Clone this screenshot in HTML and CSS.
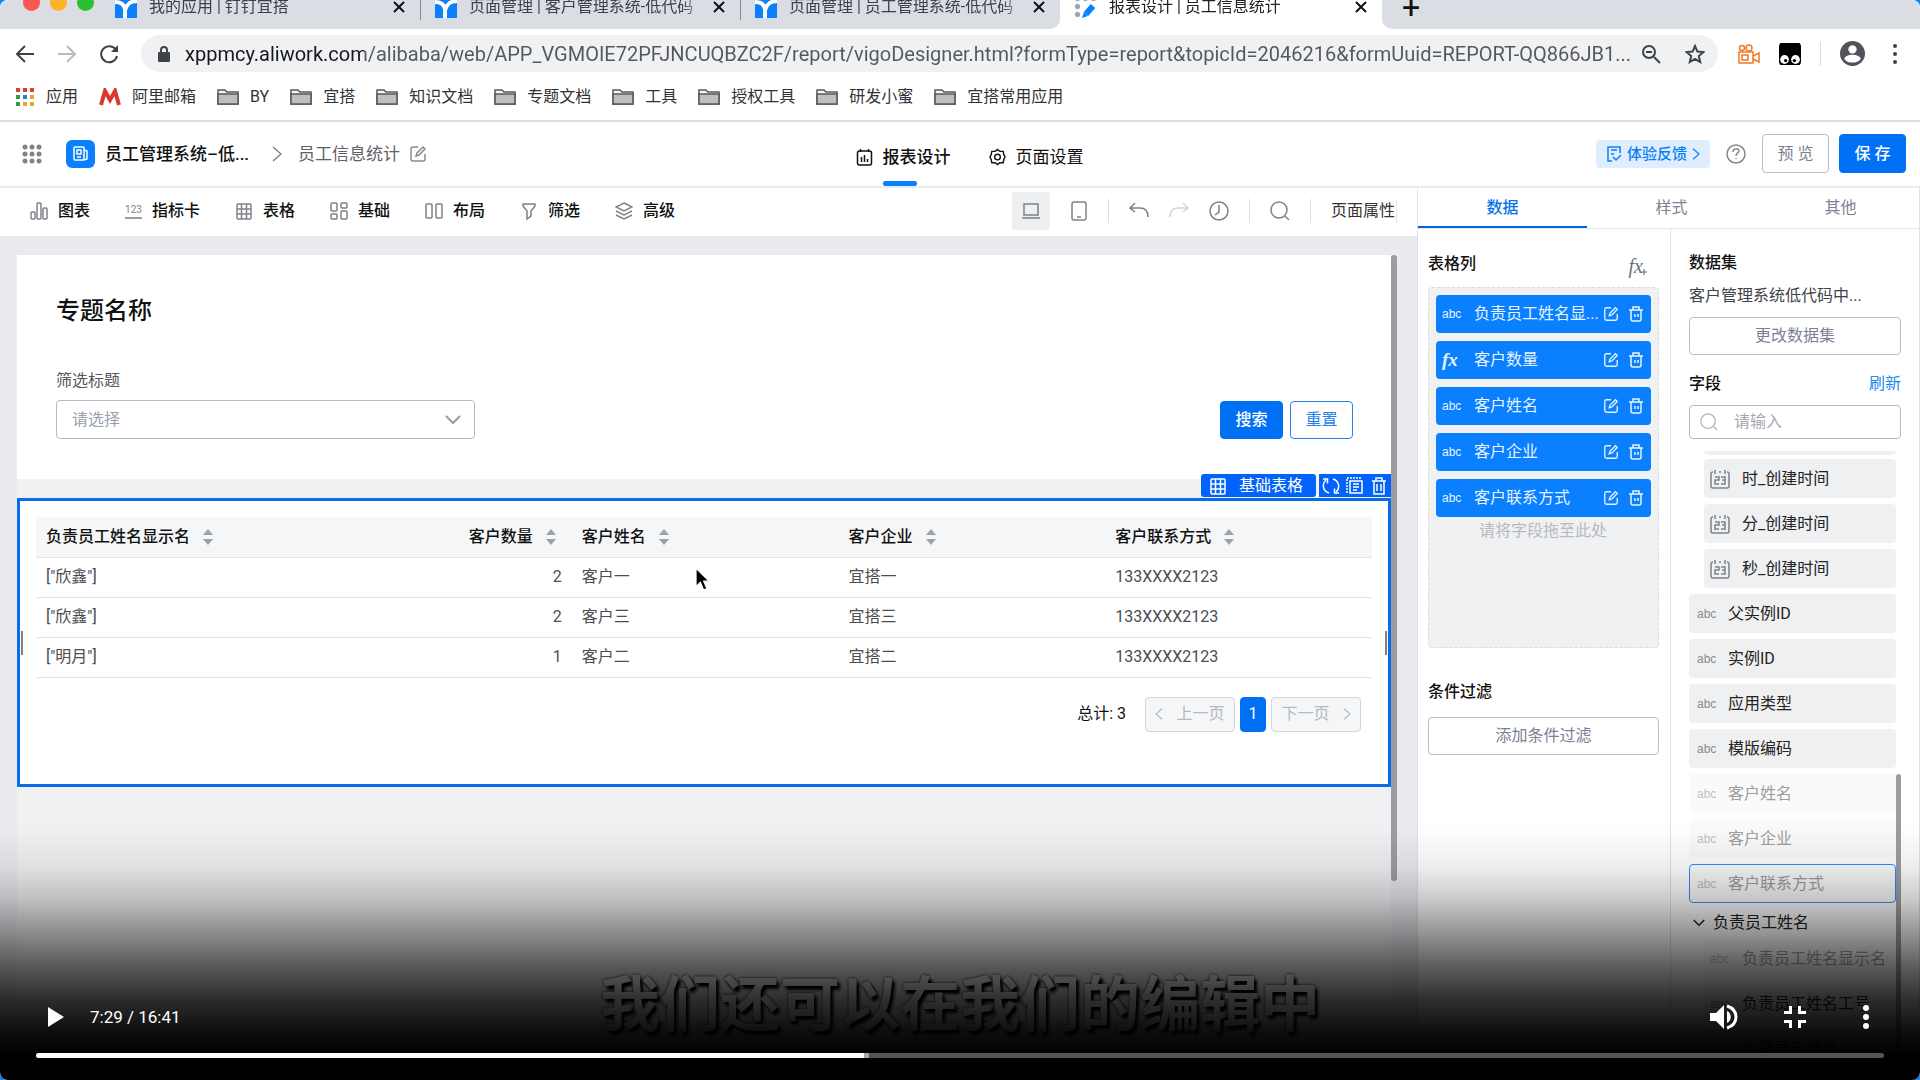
FILE: index.html
```html
<!DOCTYPE html>
<html lang="zh-CN">
<head>
    <meta charset="UTF-8">
    <meta name="viewport" content="width=device-width, initial-scale=1.0">
    <title>报表设计 | 员工信息统计</title>
    <link rel="stylesheet" href="styles.css">
</head>
<body>

<!-- Icons -->
<svg class="sprite" aria-hidden="true">
    <symbol id="i-close" viewBox="0 0 12 12"><path d="M1 1l10 10M11 1L1 11"/></symbol>
    <symbol id="i-yida" viewBox="0 0 22 22"><path d="M0 0h22v22H0z" fill="#0a80ff" stroke="none"/><path d="M0 6c6 0 9 2 10 7v9M22 5c-7 0-10 3-12 9" stroke="#fff" stroke-width="4"/></symbol>
    <symbol id="i-design" viewBox="0 0 22 22"><g fill="#9da3ad" stroke="none"><rect width="5" height="5" rx="2"/><rect x="8" width="5" height="5" rx="2"/><rect x="16" width="5" height="5" rx="2"/><rect y="8" width="5" height="5" rx="2"/><rect y="16" width="5" height="5" rx="2"/></g><path d="M11 18L18 10" stroke="#0a80ff" stroke-width="6"/><path d="M7 22l2-6 4 4z" fill="#0a80ff" stroke="none"/></symbol>
    <symbol id="i-back" viewBox="0 0 20 20"><path d="M19 10H3M10 2l-8 8 8 8"/></symbol>
    <symbol id="i-fwd" viewBox="0 0 20 20"><path d="M1 10h16M10 2l8 8-8 8"/></symbol>
    <symbol id="i-reload" viewBox="0 0 20 20"><path d="M17 6a8 8 0 1 0 1 6"/><path d="M19 1v7h-7z" fill="currentColor" stroke="none"/></symbol>
    <symbol id="i-lock" viewBox="0 0 12 16"><path d="M1 6h10a1 1 0 0 1 1 1v8a1 1 0 0 1-1 1H1a1 1 0 0 1-1-1V7a1 1 0 0 1 1-1z" fill="currentColor" stroke="none"/><path d="M3 7V4a3 3 0 0 1 6 0v3"/></symbol>
    <symbol id="i-zoomout" viewBox="0 0 20 20"><circle cx="8" cy="8" r="6"/><path d="M13 13l6 6M5 8h6"/></symbol>
    <symbol id="i-star" viewBox="0 0 20 20"><path d="M10 2l2.400 5.600 6 .5-4.600 4 1.400 5.900-5.200-3.200L4.800 18l1.400-5.900-4.600-4 6-.5z"/></symbol>
    <symbol id="i-camera" viewBox="0 0 22 20"><path d="M1 8h14v11H1zM15 12l6-3v9l-6-3M4 11h6v5H4z"/><circle cx="4" cy="4" r="2.500"/><circle cx="11" cy="4" r="3"/></symbol>
    <symbol id="i-monkey" viewBox="0 0 20 20"><rect y="-1" width="20" height="22" rx="4" fill="#000" stroke="none"/><circle cx="5" cy="15" r="4" fill="#fff" stroke="none"/><circle cx="15" cy="15" r="4" fill="#fff" stroke="none"/><circle cx="6" cy="16" r="1.500" fill="#000" stroke="none"/><circle cx="14" cy="16" r="1.500" fill="#000" stroke="none"/></symbol>
    <symbol id="i-user" viewBox="0 0 24 24"><circle cx="12" cy="12" r="12" fill="#50535a" stroke="none"/><circle cx="12" cy="8" r="4" fill="#fff" stroke="none"/><path d="M4 17c2-5 14-5 16 0-3 5-13 5-16 0z" fill="#fff" stroke="none"/></symbol>
    <symbol id="i-more" viewBox="0 0 6 24"><g fill="currentColor" stroke="none"><circle cx="3" cy="4" r="2"/><circle cx="3" cy="12" r="2"/><circle cx="3" cy="20" r="2"/></g></symbol>
    <symbol id="i-menu" viewBox="0 0 8 26"><g fill="currentColor" stroke="none"><circle cx="4" cy="4" r="3"/><circle cx="4" cy="13" r="3"/><circle cx="4" cy="22" r="3"/></g></symbol>
    <symbol id="i-apps" viewBox="0 0 18 18"><g stroke="none"><path d="M0 0h4v4H0zM7 0h4v4H7zM14 0h4v4h-4z" fill="#e33b2e"/><path d="M0 7h4v4H0z" fill="#2d9a4c"/><path d="M7 7h4v4H7z" fill="#2a7de1"/><path d="M14 7h4v4h-4zM7 14h4v4H7zM14 14h4v4h-4z" fill="#e5a823"/><path d="M0 14h4v4H0z" fill="#2d9a4c"/></g></symbol>
    <symbol id="i-mail" viewBox="0 0 22 18"><path d="M2 17L6 3l5 9 5-9 4 14" stroke="#d9382c" stroke-width="4"/></symbol>
    <symbol id="i-folder" viewBox="0 0 22 18"><path d="M1 16V2h7l2 2h11v12z" fill="#f4f4f4"/><path d="M1 6h20v10H1z" fill="#bfbfbf"/></symbol>
    <symbol id="i-dots9" viewBox="0 0 20 20"><g fill="#7f8389" stroke="none"><circle cx="3" cy="3" r="2.500"/><circle cx="10" cy="3" r="2.500"/><circle cx="17" cy="3" r="2.500"/><circle cx="3" cy="10" r="2.500"/><circle cx="10" cy="10" r="2.500"/><circle cx="17" cy="10" r="2.500"/><circle cx="3" cy="17" r="2.500"/><circle cx="10" cy="17" r="2.500"/><circle cx="17" cy="17" r="2.500"/></g></symbol>
    <symbol id="i-doc" viewBox="0 0 16 16"><rect x="1" y="1" width="10" height="13" rx="1"/><path d="M11 4l3 1v8l-3 1M4 4h4v4H4zM4 11h4"/></symbol>
    <symbol id="i-right" viewBox="0 0 10 16"><path d="M1 1l8 7-8 7"/></symbol>
    <symbol id="i-left" viewBox="0 0 10 16"><path d="M9 1L1 8l8 7"/></symbol>
    <symbol id="i-down" viewBox="0 0 16 10"><path d="M1 1l7 7 7-7"/></symbol>
    <symbol id="i-edit" viewBox="0 0 18 18"><path d="M9 2H4a2 2 0 0 0-2 2v10a2 2 0 0 0 2 2h10a2 2 0 0 0 2-2V9M7 11l1-3 6-6 2 2-6 6z"/></symbol>
    <symbol id="i-report" viewBox="0 0 16 18"><rect x="1" y="3" width="14" height="14" rx="2"/><path d="M4 1v3M12 1v3M5 9v5M8 7v7M11 11v3"/></symbol>
    <symbol id="i-gear" viewBox="0 0 18 18"><path d="M9 1l2.500 2H15l.7 3.500L17 9l-1.300 2.500L15 15h-3.500L9 17l-2.500-2H3l-.7-3.500L1 9l1.300-2.500L3 3h3.500z"/><circle cx="9" cy="9" r="3"/></symbol>
    <symbol id="i-feedback" viewBox="0 0 16 16"><path d="M6 15H2V1h12v6M5 4h6M5 8h3M7 11l3 3 5-5"/></symbol>
    <symbol id="i-help" viewBox="0 0 20 20"><circle cx="10" cy="10" r="9"/><path d="M7 8c0-4 6-4 6-1 0 2-3 2-3 5M10 14v1"/></symbol>
    <symbol id="i-chart" viewBox="0 0 18 18"><rect x="1" y="10" width="4" height="7" rx="1"/><rect x="7" y="1" width="4" height="16" rx="1"/><rect x="13" y="6" width="4" height="11" rx="1"/></symbol>
    <symbol id="i-grid" viewBox="0 0 18 18"><rect x="2" y="2" width="14" height="15" rx="1"/><path d="M2 7h14M2 12h14M6.500 2v15M11.500 2v15"/></symbol>
    <symbol id="i-base" viewBox="0 0 18 18"><rect x="1" y="1" width="6" height="8" rx="1"/><rect x="11" y="1" width="6" height="5" rx="1"/><rect x="1" y="12" width="6" height="5" rx="1"/><rect x="11" y="9" width="6" height="8" rx="1"/></symbol>
    <symbol id="i-layout" viewBox="0 0 18 18"><rect x="1" y="2" width="6" height="14" rx="1"/><rect x="11" y="2" width="6" height="14" rx="1"/></symbol>
    <symbol id="i-filter" viewBox="0 0 18 18"><path d="M3 2h12v2l-4 5v5l-4 3V9L3 4z"/></symbol>
    <symbol id="i-layers" viewBox="0 0 18 18"><path d="M9 1l8 4-8 4-8-4zM1 9l8 4 8-4M1 13l8 4 8-4"/></symbol>
    <symbol id="i-laptop" viewBox="0 0 20 18"><path d="M3 2h14v11H3zM1 16h18"/></symbol>
    <symbol id="i-phone" viewBox="0 0 16 20"><rect x="1" y="1" width="14" height="18" rx="2"/><path d="M6 16h4"/></symbol>
    <symbol id="i-undo" viewBox="0 0 20 18"><path d="M6 1L1 6l5 4M1 6h10c5 0 8 3 8 9"/></symbol>
    <symbol id="i-redo" viewBox="0 0 20 18"><path d="M14 1l5 5-5 4M19 6H9c-5 0-8 3-8 9"/></symbol>
    <symbol id="i-clock" viewBox="0 0 20 20"><circle cx="10" cy="10" r="9"/><path d="M10 4v7l-4 3"/></symbol>
    <symbol id="i-search" viewBox="0 0 20 20"><circle cx="9" cy="9" r="8"/><path d="M15 15l4 4"/></symbol>
    <symbol id="i-sort" viewBox="0 0 12 16"><path d="M6 0l5 6H1zM6 16l5-6H1z" fill="#9da1ab" stroke="none"/></symbol>
    <symbol id="i-sync" viewBox="0 0 18 18"><path d="M7 16A7.500 7.500 0 0 1 4 3M11 2a7.500 7.500 0 0 1 3 13M1 2h4.500v4.500M17 16h-4.500v-4.500"/></symbol>
    <symbol id="i-copy" viewBox="0 0 18 18"><path d="M4 4h12v12H4z"/><path d="M1 16V1h15" stroke-dasharray="2 1"/><path d="M7 7h6M7 10h6M7 13h4"/></symbol>
    <symbol id="i-trash" viewBox="0 0 16 18"><path d="M1 4h14M5 4V1h6v3M3 4v13h10V4M6 7v7M10 7v7"/></symbol>
    <symbol id="i-bin" viewBox="0 0 16 18"><path d="M1 5h14M5 5V2h6v3M3 5v9a2 2 0 0 0 2 2h6a2 2 0 0 0 2-2V5M7 9v3M10 9v3"/></symbol>
    <symbol id="i-cal" viewBox="0 0 20 20"><path d="M3 3a2 2 0 0 0-2 2v12a2 2 0 0 0 2 2h14a2 2 0 0 0 2-2V5a2 2 0 0 0-2-2M5 1v4M15 1v4M9 3h2M5 8h4v3H5v4h4M11 8h4v7h-4M12 11h3"/></symbol>
    <symbol id="i-play" viewBox="0 0 16 20"><path d="M0 0l16 10L0 20z" fill="#fff" stroke="none"/></symbol>
    <symbol id="i-volume" viewBox="0 0 28 26"><path d="M0 9v8h6l8 8V1L6 9z" fill="#fff" stroke="none"/><path d="M17 7c5 2 5 10 0 12z" fill="#fff" stroke="none"/><path d="M17 2c12 4 12 18 0 22" stroke="#fff" stroke-width="3"/></symbol>
    <symbol id="i-exit" viewBox="0 0 22 22"><path d="M0 6.500h6.500V0M15.500 0v6.500H22M0 15.500h6.500V22M15.500 22v-6.500H22" stroke="#fff" stroke-width="3"/></symbol>
</svg>

<div class="window">

    <div class="tab-strip">
        <div class="lights"><i class="red"></i><i class="yellow"></i><i class="green"></i></div>
        <div class="tab"><svg class="fav"><use href="#i-yida"/></svg><span>我的应用 | 钉钉宜搭</span><button aria-label="关闭"><svg><use href="#i-close"/></svg></button></div>
        <div class="tab"><svg class="fav"><use href="#i-yida"/></svg><span>页面管理 | 客户管理系统-低代码</span><button aria-label="关闭"><svg><use href="#i-close"/></svg></button></div>
        <div class="tab"><svg class="fav"><use href="#i-yida"/></svg><span>页面管理 | 员工管理系统-低代码</span><button aria-label="关闭"><svg><use href="#i-close"/></svg></button></div>
        <div class="tab active"><svg class="fav"><use href="#i-design"/></svg><span>报表设计 | 员工信息统计</span><button aria-label="关闭"><svg><use href="#i-close"/></svg></button></div>
        <div class="tab-rest"><button aria-label="新标签页">+</button></div>
    </div>

    <div class="address-row">
        <button class="nav-btn" aria-label="后退"><svg><use href="#i-back"/></svg></button>
        <button class="nav-btn off" aria-label="前进"><svg><use href="#i-fwd"/></svg></button>
        <button class="nav-btn" aria-label="刷新"><svg><use href="#i-reload"/></svg></button>
        <div class="url-bar">
            <svg class="lock"><use href="#i-lock"/></svg>
            <input type="text" aria-label="地址" value="xppmcy.aliwork.com/alibaba/web/APP_VGMOIE72PFJNCUQBZC2F/report/vigoDesigner.html?formType=report&amp;topicId=2046216&amp;formUuid=REPORT-QQ866JB1...">
            <svg><use href="#i-zoomout"/></svg>
            <svg><use href="#i-star"/></svg>
        </div>
        <div class="extensions">
            <svg class="orange"><use href="#i-camera"/></svg>
            <svg><use href="#i-monkey"/></svg>
            <i class="vline"></i>
            <svg class="avatar"><use href="#i-user"/></svg>
            <svg class="more"><use href="#i-more"/></svg>
        </div>
    </div>

    <nav class="bookmarks">
        <a href="#" class="apps"><svg><use href="#i-apps"/></svg>应用</a>
        <a href="#"><svg><use href="#i-mail"/></svg>阿里邮箱</a>
        <a href="#"><svg><use href="#i-folder"/></svg>BY</a>
        <a href="#"><svg><use href="#i-folder"/></svg>宜搭</a>
        <a href="#"><svg><use href="#i-folder"/></svg>知识文档</a>
        <a href="#"><svg><use href="#i-folder"/></svg>专题文档</a>
        <a href="#"><svg><use href="#i-folder"/></svg>工具</a>
        <a href="#"><svg><use href="#i-folder"/></svg>授权工具</a>
        <a href="#"><svg><use href="#i-folder"/></svg>研发小蜜</a>
        <a href="#"><svg><use href="#i-folder"/></svg>宜搭常用应用</a>
    </nav>

    <header class="app-header">
        <div class="crumbs">
            <svg class="dots"><use href="#i-dots9"/></svg>
            <span class="app-icon"><svg><use href="#i-doc"/></svg></span>
            <strong>员工管理系统–低...</strong>
            <svg class="sep"><use href="#i-right"/></svg>
            <span class="current">员工信息统计</span>
            <svg class="pen"><use href="#i-edit"/></svg>
        </div>
        <nav class="modes">
            <a href="#" class="on"><svg><use href="#i-report"/></svg><span>报表设计</span></a>
            <a href="#"><svg><use href="#i-gear"/></svg><span>页面设置</span></a>
        </nav>
        <div class="actions">
            <button class="feedback"><svg><use href="#i-feedback"/></svg>体验反馈<svg class="arrow"><use href="#i-right"/></svg></button>
            <button class="help" aria-label="帮助"><svg><use href="#i-help"/></svg></button>
            <button class="btn big">预 览</button>
            <button class="btn big primary">保 存</button>
        </div>
    </header>

    <div class="workspace">
        <main>
            <div class="toolbar">
                <button><svg><use href="#i-chart"/></svg>图表</button>
                <button><b class="num">123</b>指标卡</button>
                <button><svg><use href="#i-grid"/></svg>表格</button>
                <button><svg><use href="#i-base"/></svg>基础</button>
                <button><svg><use href="#i-layout"/></svg>布局</button>
                <button><svg><use href="#i-filter"/></svg>筛选</button>
                <button><svg><use href="#i-layers"/></svg>高级</button>
                <div class="tools">
                    <button class="square" aria-label="电脑"><svg><use href="#i-laptop"/></svg></button>
                    <button class="phone" aria-label="手机"><svg><use href="#i-phone"/></svg></button>
                    <i class="vline"></i>
                    <button aria-label="撤销"><svg><use href="#i-undo"/></svg></button>
                    <button class="off" aria-label="重做"><svg><use href="#i-redo"/></svg></button>
                    <button aria-label="历史"><svg><use href="#i-clock"/></svg></button>
                    <i class="vline"></i>
                    <button aria-label="搜索"><svg><use href="#i-search"/></svg></button>
                    <i class="vline"></i>
                    <button class="props">页面属性</button>
                </div>
            </div>

            <div class="canvas">
                <div class="page">
                    <section class="top-card">
                        <h1>专题名称</h1>
                        <label for="filter">筛选标题</label>
                        <div class="filter-row">
                            <div class="select">
                                <select id="filter"><option>请选择</option></select>
                                <svg><use href="#i-down"/></svg>
                            </div>
                            <div class="filter-btns">
                                <button class="btn primary">搜索</button>
                                <button class="btn ghost">重置</button>
                            </div>
                        </div>
                    </section>

                    <section class="selected">
                        <div class="block-tag">
                            <span class="name"><svg><use href="#i-grid"/></svg>基础表格</span>
                            <span class="ops"><svg><use href="#i-sync"/></svg><svg><use href="#i-copy"/></svg><svg><use href="#i-trash"/></svg></span>
                        </div>
                        <i class="handle left"></i>
                        <i class="handle right"></i>
                        <table>
                            <thead>
                                <tr>
                                    <th class="first">负责员工姓名显示名<svg><use href="#i-sort"/></svg></th>
                                    <th class="r">客户数量<svg><use href="#i-sort"/></svg></th>
                                    <th>客户姓名<svg><use href="#i-sort"/></svg></th>
                                    <th>客户企业<svg><use href="#i-sort"/></svg></th>
                                    <th>客户联系方式<svg><use href="#i-sort"/></svg></th>
                                </tr>
                            </thead>
                            <tbody>
                                <tr><td>["欣鑫"]</td><td class="r">2</td><td>客户一</td><td>宜搭一</td><td>133XXXX2123</td></tr>
                                <tr><td>["欣鑫"]</td><td class="r">2</td><td>客户三</td><td>宜搭三</td><td>133XXXX2123</td></tr>
                                <tr><td>["明月"]</td><td class="r">1</td><td>客户二</td><td>宜搭二</td><td>133XXXX2123</td></tr>
                            </tbody>
                        </table>
                        <div class="pager">
                            <span>总计: 3</span>
                            <button disabled><svg><use href="#i-left"/></svg>上一页</button>
                            <button class="num-page">1</button>
                            <button disabled>下一页<svg><use href="#i-right"/></svg></button>
                        </div>
                        <svg class="cursor" viewBox="0 0 14 22"><path d="M1 1v17l4-4 3 7 3-1-3-7h5z" fill="#000" stroke="#fff"/></svg>
                    </section>
                </div>
                <div class="scroll"></div>
            </div>
        </main>

        <aside>
            <nav class="side-tabs">
                <a href="#" class="on">数据</a>
                <a href="#">样式</a>
                <a href="#">其他</a>
            </nav>
            <div class="side-cols">
                <div class="columns">
                    <div class="title">表格列<i class="fx">fx<svg viewBox="0 0 8 8"><path d="M4 0v8M0 4h8"/></svg></i></div>
                    <ul class="drop">
                        <li><small>abc</small><span>负责员工姓名显...</span><svg><use href="#i-edit"/></svg><svg><use href="#i-bin"/></svg></li>
                        <li><em>fx</em><span>客户数量</span><svg><use href="#i-edit"/></svg><svg><use href="#i-bin"/></svg></li>
                        <li><small>abc</small><span>客户姓名</span><svg><use href="#i-edit"/></svg><svg><use href="#i-bin"/></svg></li>
                        <li><small>abc</small><span>客户企业</span><svg><use href="#i-edit"/></svg><svg><use href="#i-bin"/></svg></li>
                        <li><small>abc</small><span>客户联系方式</span><svg><use href="#i-edit"/></svg><svg><use href="#i-bin"/></svg></li>
                        <li class="hint">请将字段拖至此处</li>
                    </ul>
                    <div class="title">条件过滤</div>
                    <button class="btn wide">添加条件过滤</button>
                </div>

                <div class="dataset">
                    <div class="title">数据集</div>
                    <p>客户管理系统低代码中...</p>
                    <button class="btn wide">更改数据集</button>
                    <div class="title fields-title">字段<a href="#">刷新</a></div>
                    <div class="search">
                        <svg><use href="#i-search"/></svg>
                        <input type="text" placeholder="请输入" aria-label="搜索字段">
                    </div>
                    <div class="field-box">
                        <ul class="fields">
                            <li class="sub cut"></li>
                            <li class="sub"><svg><use href="#i-cal"/></svg>时_创建时间</li>
                            <li class="sub"><svg><use href="#i-cal"/></svg>分_创建时间</li>
                            <li class="sub"><svg><use href="#i-cal"/></svg>秒_创建时间</li>
                            <li><small>abc</small>父实例ID</li>
                            <li><small>abc</small>实例ID</li>
                            <li><small>abc</small>应用类型</li>
                            <li><small>abc</small>模版编码</li>
                            <li class="used"><small>abc</small>客户姓名</li>
                            <li class="used"><small>abc</small>客户企业</li>
                            <li class="used focus"><small>abc</small>客户联系方式</li>
                            <li class="group"><svg><use href="#i-down"/></svg>负责员工姓名</li>
                            <li class="sub used"><small>abc</small>负责员工姓名显示名</li>
                            <li class="sub"><small>abc</small>负责员工姓名工号</li>
                            <li class="sub"><small>abc</small>负责员工姓名</li>
                        </ul>
                        <div class="scroll"></div>
                    </div>
                </div>
            </div>
        </aside>
    </div>

    <div class="subtitle">我们还可以在我们的编辑中</div>

    <!-- Video controls -->
    <div class="player">
        <div class="controls">
            <button aria-label="播放"><svg class="play"><use href="#i-play"/></svg></button>
            <span class="time">7:29 / 16:41</span>
            <button aria-label="音量"><svg class="vol"><use href="#i-volume"/></svg></button>
            <button aria-label="退出全屏"><svg class="exit"><use href="#i-exit"/></svg></button>
            <button aria-label="更多"><svg class="menu"><use href="#i-menu"/></svg></button>
        </div>
        <input class="seek" type="range" min="0" max="1001" value="449" aria-label="进度" style="--played: 44.8%; --loaded: 45.1%">
    </div>
</div>

</body>
</html>
```
FILE: styles.css
```css
* {
    box-sizing: border-box;
}

body {
    margin: 0;
    background: #0a84ff;
    font-family: Roboto, "Noto Sans CJK SC", sans-serif;
    font-size: 16px;
    line-height: 24px;
    color: #111;
}

a {
    color: inherit;
    text-decoration: none;
}

button,
input,
select {
    font: inherit;
    color: inherit;
    border: none;
    background: none;
    padding: 0;
}

button {
    display: flex;
    align-items: center;
    justify-content: center;
}

ul {
    list-style: none;
    margin: 0;
    padding: 0;
}

svg {
    width: 18px;
    height: 18px;
    flex: none;
    fill: none;
    stroke: currentColor;
    stroke-width: 1.5;
}

.sprite {
    position: absolute;
    width: 0;
    height: 0;
}

.window {
    position: relative;
    display: flex;
    flex-direction: column;
    height: 100vh;
    overflow: hidden;
    border-radius: 8px;
    background: #fff;
}

.vline {
    width: 1px;
    height: 24px;
    background: #dcdee3;
}

/* Browser tabs */
.tab-strip {
    display: flex;
    align-items: flex-end;
    height: 29px;
    overflow: hidden;
    flex: none;
    background: #fff;
}

.lights {
    display: flex;
    align-items: flex-end;
    gap: 10px;
    width: 100px;
    height: 44px;
    padding: 0 0 18px 23px;
    background: #dadde4;
}

.lights i {
    width: 17px;
    height: 17px;
    border-radius: 50%;
}

.red { background: #fc5650; }
.yellow { background: #fdb42c; }
.green { background: #28c131; }

.tab {
    display: flex;
    align-items: center;
    gap: 12px;
    width: 320px;
    height: 44px;
    padding: 0 15px;
    background: #dadde4;
    color: #3c3f45;
}

.tab + .tab:not(.active) {
    background: linear-gradient(#8a8d94, #8a8d94) 0 11px / 1px 24px no-repeat #dadde4;
}

.tab:nth-child(4) {
    border-bottom-right-radius: 10px;
}

.tab.active {
    width: 322px;
    background: #fff;
    color: #222;
}

.tab span {
    flex: 1;
    overflow: hidden;
    white-space: nowrap;
    -webkit-mask-image: linear-gradient(to right, #000 90%, transparent);
    mask-image: linear-gradient(to right, #000 90%, transparent);
}

.tab .fav {
    width: 22px;
    height: 22px;
}

.tab button {
    margin-left: -5px;
}

.tab button svg {
    width: 12px;
    height: 12px;
    color: #111;
    stroke-width: 2;
}

.tab-rest {
    display: flex;
    align-items: center;
    flex: 1;
    height: 44px;
    padding-left: 20px;
    border-bottom-left-radius: 10px;
    background: #dadde4;
}

.tab-rest button {
    font-size: 32px;
}

/* Address bar */
.address-row {
    display: flex;
    align-items: center;
    height: 49px;
    flex: none;
    padding: 0 21px 0 15px;
    color: #3f4247;
}

.nav-btn {
    width: 20px;
    margin-right: 22px;
}

.nav-btn svg {
    width: 20px;
    height: 20px;
    stroke-width: 2;
}

.off {
    color: #b9bbbf;
}

.url-bar {
    display: flex;
    align-items: center;
    gap: 24px;
    flex: 1;
    height: 37px;
    padding: 0 13px 0 17px;
    border-radius: 20px;
    background: #eff1f2;
}

.url-bar svg {
    width: 20px;
    height: 20px;
    stroke-width: 2;
}

.url-bar .lock {
    width: 12px;
    height: 16px;
    margin-right: -9px;
}

.url-bar input {
    flex: 1;
    min-width: 0;
    margin-right: -20px;
    font-size: 20px;
    color: transparent;
    background: linear-gradient(to right, #16181b 179px, #54575c 179px);
    -webkit-background-clip: text;
    background-clip: text;
}

.extensions {
    display: flex;
    align-items: center;
    gap: 19px;
    padding-left: 20px;
}

.extensions svg {
    width: 22px;
    height: 22px;
}

.extensions .orange {
    color: #f07a22;
}

.extensions .avatar {
    width: 25px;
    height: 25px;
}

.extensions .more {
    width: 8px;
    height: 24px;
    margin-left: 7px;
}

.bookmarks {
    display: flex;
    align-items: center;
    gap: 21px;
    height: 44px;
    flex: none;
    padding: 0 16px 5px;
    border-bottom: 2px solid #dcdde0;
    color: #303338;
    white-space: nowrap;
}

.bookmarks a {
    display: flex;
    align-items: center;
    gap: 11px;
}

.bookmarks svg {
    width: 22px;
    stroke: #55585c;
}

.bookmarks .apps {
    gap: 12px;
}

.bookmarks .apps svg {
    width: 18px;
}

/* App header */
.app-header {
    display: grid;
    grid-template-columns: 1fr auto 1fr;
    height: 66px;
    flex: none;
    padding: 0 14px 0 22px;
    border-bottom: 2px solid #e9ebee;
}

.crumbs,
.actions {
    display: flex;
    align-items: center;
    padding-bottom: 1px;
}

.crumbs strong {
    margin: 0 23px 0 10px;
    font-size: 17px;
    font-weight: 500;
}

.crumbs .dots {
    width: 20px;
    height: 20px;
    margin-right: 24px;
}

.app-icon {
    display: flex;
    align-items: center;
    justify-content: center;
    width: 29px;
    height: 28px;
    border-radius: 6px;
    background: #0a80ff;
    color: #fff;
}

.app-icon svg {
    width: 16px;
    height: 16px;
}

.crumbs .sep {
    width: 10px;
    height: 16px;
    margin-right: 16px;
    color: #7c8087;
}

.current {
    font-size: 17px;
    color: #5f6268;
}

.crumbs .pen {
    margin-left: 9px;
    color: #868a91;
}

.modes {
    display: flex;
    gap: 38px;
    padding-left: 11px;
    font-size: 17px;
}

.modes a {
    display: flex;
    gap: 10px;
    align-items: center;
    padding-top: 6px;
}

.modes svg {
    width: 17px;
}

.modes span {
    display: flex;
    align-items: center;
    height: 100%;
}

.modes .on span {
    position: relative;
    font-weight: 500;
}

.modes .on span::after {
    content: "";
    position: absolute;
    left: 0;
    bottom: 0;
    width: 34px;
    height: 5px;
    border-radius: 3px;
    background: #0a80ff;
}

.actions {
    justify-content: flex-end;
}

.feedback {
    gap: 5px;
    height: 28px;
    padding: 0 10px;
    border-radius: 4px;
    background: #deeeff;
    color: #0a80f5;
    font-size: 15px;
    font-weight: 500;
}

.feedback svg {
    width: 16px;
    height: 16px;
}

.feedback .arrow {
    width: 8px;
    height: 12px;
}

.help {
    margin: 0 16px;
    color: #85888e;
}

.help svg {
    width: 20px;
    height: 20px;
}

.btn {
    height: 38px;
    border: 1px solid #b9bdc4;
    border-radius: 4px;
    background: #fff;
    color: #7b8192;
    width: 63px;
}

.btn.big {
    width: 67px;
    height: 39px;
    margin-left: 10px;
}

.actions .help + .btn {
    margin-left: 0;
}

.btn.primary {
    border-color: #0070f5;
    background: #0070f5;
    color: #fff;
    font-weight: 500;
}

.btn.ghost {
    border-color: #2680ea;
    color: #2680ea;
}

.btn.wide {
    width: 100%;
}

/* Workspace */
.workspace {
    display: flex;
    flex: 1;
    min-height: 0;
}

main {
    display: flex;
    flex-direction: column;
    flex: 1;
    min-width: 0;
}

.toolbar {
    display: flex;
    align-items: center;
    gap: 35px;
    height: 48px;
    flex: none;
    padding: 0 20px 2px 30px;
}

.toolbar button {
    gap: 10px;
    font-weight: 500;
    white-space: nowrap;
}

.toolbar svg,
.num {
    color: #7e8288;
}

.num {
    border-bottom: 2px solid #9b9ea3;
    font-size: 10px;
    line-height: 14px;
    font-weight: 400;
}

.tools {
    display: flex;
    align-items: center;
    gap: 20px;
    margin-left: auto;
}

.tools svg {
    width: 20px;
    height: 20px;
}

.tools .phone svg {
    width: 18px;
}

.tools .square {
    width: 38px;
    height: 38px;
    border-radius: 3px;
    background: #eeeff1;
}

.tools .off svg {
    color: #d2d4d8;
}

.tools .props {
    padding-right: 1px;
    border-right: 1px solid #e3e5e8;
    color: #333;
    font-weight: 400;
}

.canvas {
    display: flex;
    flex: 1;
    min-height: 0;
    padding: 19px 20px 0 17px;
    background: #e9ebef;
}

.page {
    flex: 1;
    background: #eff1f3;
}

.scroll {
    width: 6px;
    height: 626px;
    border-radius: 3px;
    background: #9b9da1;
}

.top-card {
    margin-bottom: 19px;
    padding: 40px 38px 40px 39px;
    background: #fff;
}

.top-card h1 {
    margin: 0 0 42px;
    font-size: 24px;
    line-height: 32px;
    font-weight: 500;
}

.top-card label {
    display: block;
    margin-bottom: 7px;
    color: #55585c;
}

.filter-row {
    display: flex;
    justify-content: space-between;
    align-items: center;
}

.select {
    position: relative;
    width: 419px;
}

.select select {
    appearance: none;
    display: block;
    width: 100%;
    height: 39px;
    padding: 0 15px;
    border: 1px solid #b6babf;
    border-radius: 4px;
    background: #fff;
    color: #9a9fb0;
}

.select svg {
    position: absolute;
    right: 14px;
    top: 15px;
    width: 16px;
    height: 10px;
    color: #989ba5;
    stroke-width: 2;
    pointer-events: none;
}

.filter-btns {
    display: flex;
    gap: 7px;
}

.selected {
    position: relative;
    height: 289px;
    padding: 16px;
    border: 3px solid #0b6ce8;
    background: #fff;
}

.block-tag {
    position: absolute;
    right: -3px;
    bottom: 100%;
    display: flex;
    gap: 3px;
    padding-bottom: 4px;
    color: #fff;
}

.block-tag span {
    display: flex;
    align-items: center;
    height: 23px;
    background: #0263fa;
}

.block-tag .name {
    gap: 12px;
    padding: 0 13px 0 8px;
    border-radius: 3px;
}

.block-tag .ops {
    gap: 6px;
    padding: 0 3px;
}

.handle {
    position: absolute;
    top: 130px;
    width: 2px;
    height: 24px;
    background: #7d8087;
}

.handle.left { left: 1px; }
.handle.right { right: 1px; }

table {
    width: 100%;
    table-layout: fixed;
    border-collapse: collapse;
}

th,
td {
    height: 40px;
    padding: 0 10px;
    border-bottom: 1px solid #e2e4e7;
    text-align: left;
    color: #4a4d52;
}

th {
    background: #f4f6f8;
    color: #111;
    font-weight: 500;
}

.first {
    width: 269px;
}

th svg {
    width: 12px;
    height: 16px;
    margin-left: 12px;
    vertical-align: -3px;
}

th.r {
    padding-right: 15px;
}

.r {
    text-align: right;
}

.pager {
    display: flex;
    align-items: center;
    justify-content: flex-end;
    gap: 5px;
    padding: 19px 11px 0 0;
}

.pager span {
    margin-right: 14px;
}

.pager button {
    gap: 13px;
    width: 90px;
    height: 35px;
    border: 1px solid #d3d6db;
    border-radius: 4px;
    background: #f4f6f8;
    color: #b5b9c1;
}

.pager svg {
    width: 8px;
    height: 12px;
}

.pager .num-page {
    width: 26px;
    border-color: #0070f5;
    background: #0070f5;
    color: #fff;
}

.cursor {
    position: absolute;
    left: 675px;
    top: 66px;
    width: 15px;
    height: 24px;
    stroke-width: 1;
}

/* Right side */
aside {
    display: flex;
    flex-direction: column;
    width: 503px;
    border-left: 1px solid #dfe1e5;
    border-right: 1px solid #dfe1e5;
}

.side-tabs {
    display: grid;
    grid-template-columns: repeat(3, 169px);
    height: 41px;
    flex: none;
    overflow: hidden;
    border-bottom: 1px solid #e2e4e8;
    color: #7d8290;
}

.side-tabs a {
    height: 40px;
    text-align: center;
    line-height: 40px;
}

.side-tabs .on {
    border-bottom: 2px solid #0066d8;
    color: #0a74e8;
    font-weight: 500;
}

.side-cols {
    display: flex;
    flex: 1;
    min-height: 0;
}

.columns {
    width: 253px;
    padding: 23px 11px 0 10px;
    border-right: 1px solid #dfe1e5;
}

.title {
    display: flex;
    justify-content: space-between;
    align-items: center;
    font-weight: 500;
}

.fx {
    display: flex;
    align-items: flex-end;
    padding-top: 4px;
    margin-right: 12px;
    font: italic 20px/18px "Liberation Serif", serif;
    color: #6d7178;
}

.fx svg {
    width: 6px;
    height: 6px;
    margin-left: -2px;
}

.drop {
    display: flex;
    flex-direction: column;
    gap: 8px;
    height: 361px;
    margin: 11px 0 32px;
    padding: 7px;
    border: 1px dashed #d9dbde;
    border-radius: 4px;
    background: #f0f1f3;
}

.drop li {
    display: flex;
    align-items: center;
    gap: 9px;
    height: 38px;
    padding: 0 7px 0 6px;
    border-radius: 4px;
    background: #0a80ff;
    color: #e8f3ff;
}

.drop span {
    flex: 1;
    min-width: 0;
    white-space: nowrap;
}

.drop svg {
    width: 16px;
}

.drop .hint {
    justify-content: center;
    height: 24px;
    margin-top: -6px;
    background: none;
    color: #b6b9be;
}

small,
.drop em {
    flex: none;
    width: 23px;
    font-family: "Liberation Sans", sans-serif;
    font-size: 12px;
}

.drop em {
    font: italic bold 19px/20px "Liberation Serif", serif;
}

.columns .title + .btn {
    margin-top: 13px;
}

.dataset {
    display: flex;
    flex-direction: column;
    flex: 1;
    min-width: 0;
    padding: 22px 18px 0;
}

.dataset p {
    margin: 9px 0;
    color: #3f4247;
}

.dataset .btn {
    flex: none;
}

.fields-title {
    margin: 17px 0 9px;
}

.fields-title a {
    color: #2388f0;
    font-weight: 400;
}

.search {
    display: flex;
    align-items: center;
    gap: 16px;
    height: 34px;
    flex: none;
    margin-bottom: 12px;
    padding: 0 10px;
    border: 1px solid #b6babf;
    border-radius: 4px;
    color: #b4b7bd;
}

.search input {
    width: 100%;
}

.search input::placeholder {
    color: #a5a8b2;
}

.field-box {
    display: flex;
    align-items: flex-end;
    flex: 1;
    min-height: 0;
    overflow: hidden;
}

.field-box .scroll {
    width: 5px;
    height: 306px;
}

.fields {
    flex: 1;
    align-self: flex-start;
}

.fields li {
    display: flex;
    align-items: center;
    height: 39px;
    gap: 8px;
    margin-bottom: 6px;
    padding-left: 8px;
    border-radius: 4px;
    background: #eff0f2;
    color: #222;
    white-space: nowrap;
}

.fields .sub {
    margin-left: 15px;
    padding-left: 6px;
}

.fields small {
    color: #888b90;
}

.fields .sub small {
    width: 24px;
}

.fields .sub svg {
    width: 20px;
    height: 20px;
    margin-right: 4px;
    color: #7f838a;
}

.fields .cut {
    height: 4px;
    margin-bottom: 4px;
    border-radius: 0 0 4px 4px;
}

.fields .used {
    background: #fafafa;
    color: #9b9da0;
}

.fields .used small {
    color: #bfc1c4;
}

.fields .focus {
    border: 1px solid #2a8cff;
    padding-left: 7px;
}

.fields .group {
    height: 28px;
    margin-bottom: 2px;
    padding-left: 4px;
    background: none;
}

.group svg {
    width: 12px;
    height: 8px;
    stroke-width: 2;
}

/* Video layer */
.subtitle {
    position: absolute;
    left: 0;
    right: 0;
    bottom: 36px;
    text-align: center;
    font-size: 60px;
    line-height: 76px;
    font-weight: 700;
    color: #fff;
    text-shadow: 3px 4px 3px #000, 0 0 3px #000;
}

.player {
    position: absolute;
    left: 0;
    right: 0;
    bottom: 0;
    display: flex;
    flex-direction: column;
    justify-content: flex-end;
    height: 260px;
    padding: 0 36px 22px;
    color: #fff;
    background: linear-gradient(
        transparent,
        rgba(0, 0, 0, .01) 13px,
        rgba(0, 0, 0, .07) 47px,
        rgba(0, 0, 0, .21) 80px,
        rgba(0, 0, 0, .42) 113px,
        rgba(0, 0, 0, .64) 147px,
        rgba(0, 0, 0, .82) 180px,
        rgba(0, 0, 0, .95) 213px,
        #000 238px
    );
}

.controls {
    display: flex;
    align-items: center;
    gap: 46px;
    height: 40px;
    margin-bottom: 16px;
    padding: 0 14px 0 12px;
}

.time {
    flex: 1;
    margin-left: -20px;
    font-size: 17px;
}

.play {
    width: 16px;
    height: 20px;
}

.vol {
    width: 28px;
    height: 26px;
}

.exit {
    width: 22px;
    height: 22px;
}

.menu {
    width: 8px;
    height: 26px;
    margin-left: 10px;
}

.seek {
    appearance: none;
    width: 100%;
    height: 5px;
    margin: 0;
    border-radius: 3px;
    background: linear-gradient(to right, #fff var(--played), #aaa var(--played), #aaa var(--loaded), #555 var(--loaded));
}

.seek::-webkit-slider-thumb {
    appearance: none;
    width: 0;
    height: 0;
}
```
